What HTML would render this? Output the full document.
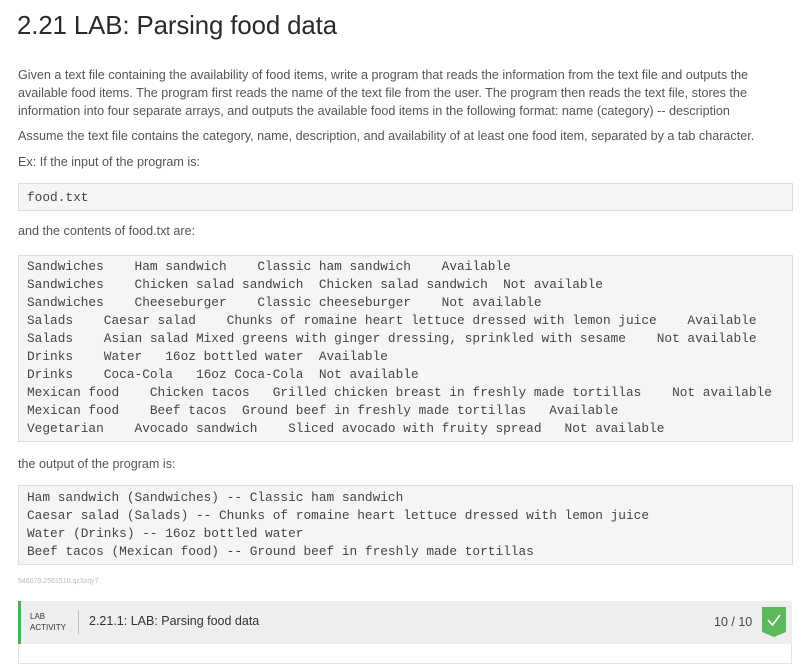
<!DOCTYPE html>
<html><head><meta charset="utf-8"><style>
body{margin:0;background:#fff;width:802px;height:660px;overflow:hidden;font-family:"Liberation Sans",sans-serif;color:#555;position:relative}
.a{position:absolute}
h1{position:absolute;left:17px;top:12px;margin:0;font-weight:normal;font-size:25.8px;color:#2a2a2a;letter-spacing:-0.1px}
.p{position:absolute;left:18px;font-size:12.6px;white-space:nowrap;line-height:18px;letter-spacing:0}
.box{position:absolute;left:18px;width:775px;background:#f5f5f5;border:1px solid #ddd;box-sizing:border-box}
pre{margin:0;font-family:"Liberation Mono",monospace;font-size:12.8px;line-height:18px;color:#444;padding-left:8px}
</style></head><body>
<h1>2.21 LAB: Parsing food data</h1>
<div class="p" style="top:66px">Given a text file containing the availability of food items, write a program that reads the information from the text file and outputs the<br>available food items. The program first reads the name of the text file from the user. The program then reads the text file, stores the<br>information into four separate arrays, and outputs the available food items in the following format: name (category) -- description</div>
<div class="p" style="top:127px">Assume the text file contains the category, name, description, and availability of at least one food item, separated by a tab character.</div>
<div class="p" style="top:153px">Ex: If the input of the program is:</div>
<div class="box" style="top:183px;height:28px"><pre style="padding-top:5px">food.txt</pre></div>
<div class="p" style="top:222px">and the contents of food.txt are:</div>
<div class="box" style="top:255px;height:187px"><pre style="padding-top:2px">Sandwiches    Ham sandwich    Classic ham sandwich    Available
Sandwiches    Chicken salad sandwich  Chicken salad sandwich  Not available
Sandwiches    Cheeseburger    Classic cheeseburger    Not available
Salads    Caesar salad    Chunks of romaine heart lettuce dressed with lemon juice    Available
Salads    Asian salad Mixed greens with ginger dressing, sprinkled with sesame    Not available
Drinks    Water   16oz bottled water  Available
Drinks    Coca-Cola   16oz Coca-Cola  Not available
Mexican food    Chicken tacos   Grilled chicken breast in freshly made tortillas    Not available
Mexican food    Beef tacos  Ground beef in freshly made tortillas   Available
Vegetarian    Avocado sandwich    Sliced avocado with fruity spread   Not available</pre></div>
<div class="p" style="top:455px">the output of the program is:</div>
<div class="box" style="top:485px;height:80px"><pre style="padding-top:3px">Ham sandwich (Sandwiches) -- Classic ham sandwich
Caesar salad (Salads) -- Chunks of romaine heart lettuce dressed with lemon juice
Water (Drinks) -- 16oz bottled water
Beef tacos (Mexican food) -- Ground beef in freshly made tortillas</pre></div>
<div class="a" style="left:18px;top:578px;font-size:7px;color:#bbb">546079.2561510.qx3zqy7</div>
<div class="a" style="left:18px;top:601px;width:774px;height:43px;background:#eee;border-left:3px solid #4caf50;box-sizing:border-box"></div>
<div class="a" style="left:30px;top:611px;font-size:8px;line-height:11px;color:#333">LAB<br>ACTIVITY</div>
<div class="a" style="left:78px;top:610px;width:1px;height:24px;background:#bbb"></div>
<div class="a" style="left:89px;top:614px;font-size:12.5px;color:#333">2.21.1: LAB: Parsing food data</div>
<div class="a" style="left:714px;top:615px;font-size:12.5px;color:#444">10 / 10</div>
<svg class="a" style="left:762px;top:607px" width="24" height="30" viewBox="0 0 24 30"><path d="M0 0H24V25L12 30L0 25Z" fill="#5cb85c"/><path d="M6 13L10.5 18L18 8" stroke="#fff" stroke-width="1.6" fill="none"/></svg>
<div class="a" style="left:18px;top:644px;width:774px;height:20px;border:1px solid #e3e3e3;border-top:none;box-sizing:border-box"></div>
</body></html>
